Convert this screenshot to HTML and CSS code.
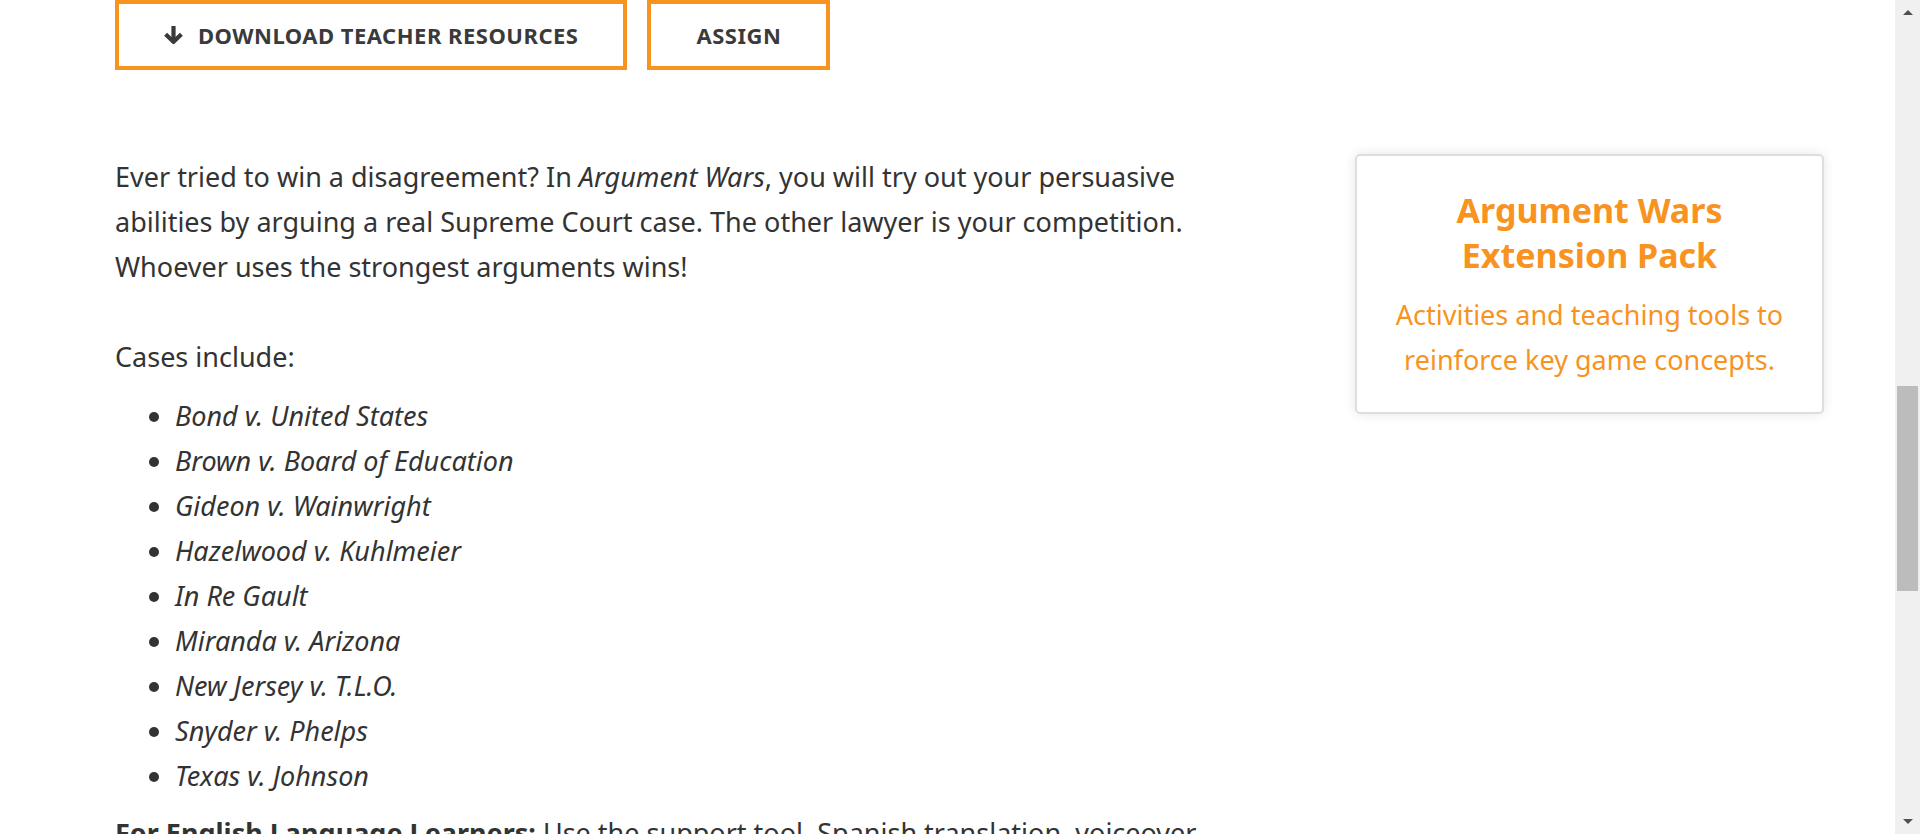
FILE: index.html
```html
<!DOCTYPE html>
<html lang="en">
<head>
<meta charset="utf-8">
<title>Argument Wars</title>
<link rel="stylesheet" href="styles.css">
</head>
<body>
<div class="page">
  <div class="actions">
    <a class="btn" href="#">
      <svg class="btn-icon" viewBox="0 0 19 18" width="19" height="18" aria-hidden="true">
        <path d="M9.5 0 V15" fill="none" stroke="#3a3a3a" stroke-width="4.2"/>
        <path d="M1.6 8.2 L9.5 15.8 L17.4 8.2" fill="none" stroke="#3a3a3a" stroke-width="4.2" stroke-linejoin="miter"/>
      </svg>
      <span>DOWNLOAD TEACHER RESOURCES</span>
    </a>
    <a class="btn" href="#"><span>ASSIGN</span></a>
  </div>
  <div class="content">
    <div class="main-col">
      <p class="intro">Ever tried to win a disagreement? In <em>Argument Wars</em>, you will try out your persuasive abilities by arguing a real Supreme Court case. The other lawyer is your competition. Whoever uses the strongest arguments wins!</p>
      <p class="lead">Cases include:</p>
      <ul class="cases">
        <li>Bond v. United States</li>
        <li>Brown v. Board of Education</li>
        <li>Gideon v. Wainwright</li>
        <li>Hazelwood v. Kuhlmeier</li>
        <li>In Re Gault</li>
        <li>Miranda v. Arizona</li>
        <li>New Jersey v. T.L.O.</li>
        <li>Snyder v. Phelps</li>
        <li>Texas v. Johnson</li>
      </ul>
      <p class="ell"><strong>For English Language Learners:</strong> Use the support tool, Spanish translation, voiceover, and glossary to help you play.</p>
    </div>
    <aside class="card">
      <h3 class="card-title">Argument Wars Extension Pack</h3>
      <p class="card-text">Activities and teaching tools to reinforce key game concepts.</p>
    </aside>
  </div>
</div>
<div class="scrollbar" aria-hidden="true">
  <div class="sb-arrow sb-up"></div>
  <div class="sb-track"><div class="sb-thumb"></div></div>
  <div class="sb-arrow sb-down"></div>
</div>
</body>
</html>
```

FILE: styles.css
```css
* {
  box-sizing: border-box;
}

html, body {
  margin: 0;
  padding: 0;
  height: 100%;
  background: #ffffff;
}

body {
  display: flex;
  overflow: hidden;
  font-family: "Noto Sans", "Open Sans", sans-serif;
  color: #333333;
}

.page {
  flex: 1;
  padding-left: 115px;
  min-width: 0;
}

.actions {
  display: flex;
  gap: 20px;
}

.btn {
  display: flex;
  align-items: center;
  height: 70px;
  padding: 0 45px;
  border: 4px solid #f7931e;
  color: #3a3a3a;
  text-decoration: none;
  font-family: "Noto Sans", sans-serif;
  font-weight: 700;
  font-size: 22px;
  letter-spacing: 0.5px;
}

.btn-icon {
  margin-right: 15px;
  flex: none;
}

.content {
  display: grid;
  grid-template-columns: 1110px 469px;
  column-gap: 130px;
  align-items: start;
  margin-top: 84px;
}

.main-col p {
  margin: 0;
  font-size: 27px;
  line-height: 45px;
}

.main-col .intro {
  margin-bottom: 45px;
}

.main-col .lead {
  margin-bottom: 14px;
}

.cases {
  margin: 0 0 12px;
  padding-left: 60px;
  font-size: 27px;
  line-height: 45px;
  font-style: italic;
}

.card {
  border: 2px solid #dedede;
  border-radius: 5px;
  box-shadow: 0 0 12px rgba(0, 0, 0, 0.10);
  padding: 32px 32px 30px;
  text-align: center;
  background: #fff;
}

.card-title {
  margin: 0;
  font-family: "Noto Sans", sans-serif;
  font-weight: 700;
  font-size: 34px;
  line-height: 45px;
  color: #f7931e;
}

.card-text {
  margin: 14px 0 0;
  font-size: 27px;
  line-height: 45px;
  color: #f7931e;
}

.scrollbar {
  width: 25px;
  flex: none;
  background: #f0f0f0;
  display: flex;
  flex-direction: column;
  height: 100vh;
}

.sb-arrow {
  height: 25px;
  flex: none;
  display: flex;
  align-items: center;
  justify-content: center;
}

.sb-up::before,
.sb-down::before {
  content: "";
  width: 0;
  height: 0;
  border-left: 5.5px solid transparent;
  border-right: 5.5px solid transparent;
}

.sb-up::before {
  border-bottom: 5px solid #505050;
}

.sb-down::before {
  border-top: 5px solid #505050;
}

.sb-track {
  flex: 1;
  padding: 361px 2px 0;
}

.sb-thumb {
  height: 205px;
  background: #bcbcbc;
}
```
